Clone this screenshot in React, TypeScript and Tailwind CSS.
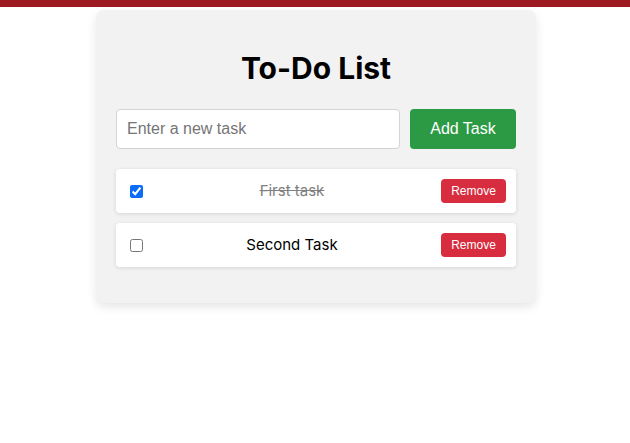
import { useState } from 'react'

type Task = { id: number; text: string; done: boolean }

const initialTasks: Task[] = [
  { id: 1, text: 'First task', done: true },
  { id: 2, text: 'Second Task', done: false },
]

export default function App() {
  const [tasks, setTasks] = useState<Task[]>(initialTasks)
  const [draft, setDraft] = useState('')

  const addTask = () => {
    if (!draft.trim()) return
    setTasks([...tasks, { id: Date.now(), text: draft.trim(), done: false }])
    setDraft('')
  }

  return (
    <div className="min-h-screen bg-white font-['Inter',sans-serif]">
      <div className="h-[7px] bg-[#9d1a20]" />
      <div className="pl-[2px]">
        <main className="mx-auto mt-[3px] w-[440px] rounded-lg bg-[#f2f2f2] px-5 pt-10 pb-9 shadow-[0_4px_10px_rgba(0,0,0,0.1)]">
          <h1 className="mb-[23px] text-center text-[30px] leading-9 font-bold text-black">To-Do List</h1>
          <div className="mb-5 flex gap-[10px]">
            <input
              value={draft}
              onChange={(e) => setDraft(e.target.value)}
              placeholder="Enter a new task"
              className="h-10 w-[284px] rounded border border-[#d4d4d4] bg-white px-[10px] font-['Liberation_Sans',Arial,sans-serif] text-base text-black outline-none placeholder:text-[#757575]"
            />
            <button
              onClick={addTask}
              className="h-10 flex-1 rounded bg-[#2c9a45] font-['Liberation_Sans',Arial,sans-serif] text-base text-white"
            >
              Add Task
            </button>
          </div>
          <ul className="flex flex-col gap-[10px]">
            {tasks.map((task) => (
              <li
                key={task.id}
                className="flex h-11 items-center rounded bg-white pr-[10px] pl-[14px] shadow-[0_1px_4px_rgba(0,0,0,0.12)]"
              >
                <input
                  type="checkbox"
                  checked={task.done}
                  onChange={() =>
                    setTasks(tasks.map((t) => (t.id === task.id ? { ...t, done: !t.done } : t)))
                  }
                  className="m-0 h-[13px] w-[13px] accent-[#0b6cf5]"
                />
                <span
                  className={`flex-1 text-center text-[15px] ${
                    task.done ? 'text-[#808080] line-through' : 'text-black'
                  }`}
                >
                  {task.text}
                </span>
                <button
                  onClick={() => setTasks(tasks.filter((t) => t.id !== task.id))}
                  className="h-6 w-[65px] rounded bg-[#d72d3e] font-['Liberation_Sans',Arial,sans-serif] text-xs text-white"
                >
                  Remove
                </button>
              </li>
            ))}
          </ul>
        </main>
      </div>
    </div>
  )
}
